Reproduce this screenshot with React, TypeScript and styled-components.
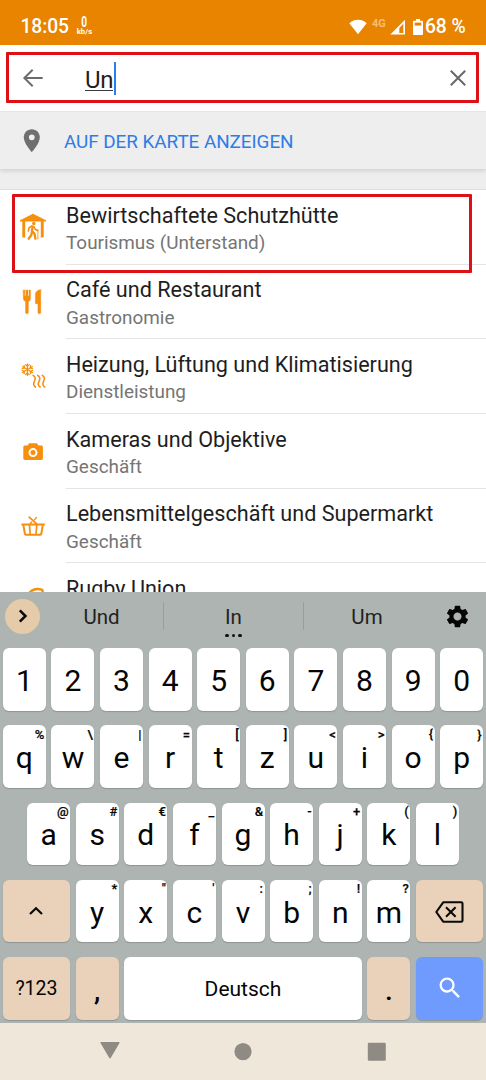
import React from "react";
import styled, { createGlobalStyle } from "styled-components";
import { MdPlace, MdSettings, MdSearch } from "react-icons/md";

const GlobalStyle = createGlobalStyle`
  * { box-sizing: border-box; }
  body { margin: 0; background: #fff; font-family: Roboto, "Liberation Sans", sans-serif; }
  svg { display: block; flex: none; }
`;

const Screen = styled.div`
  position: relative;
  width: 486px;
  height: 1080px;
  display: flex;
  flex-direction: column;
  overflow: hidden;
  background: #fff;
`;

const StatusBar = styled.header`
  display: flex;
  align-items: center;
  justify-content: space-between;
  height: 45px;
  padding: 8px 20.5px 0 20.5px;
  background: #e88400;
  color: #fff;
`;

const StatusGroup = styled.div`
  display: flex;
  align-items: center;
`;

const StatusText = styled.span<{ $after?: boolean }>`
  margin-left: ${(p) => (p.$after ? 2 : 0)}px;
  font-size: 19.3px;
  font-weight: 500;
  line-height: 24px;
  padding-top: 1px;
  letter-spacing: -0.1px;
  white-space: nowrap;
`;

const Speed = styled.div`
  display: flex;
  flex-direction: column;
  align-items: center;
  width: 17px;
  margin-left: 7px;
  font-weight: 700;
`;

const SpeedValue = styled.span`
  font-size: 14px;
  line-height: 11px;
  transform: scaleX(0.72);
`;

const SpeedUnit = styled.span`
  font-size: 7.8px;
  line-height: 8px;
`;

const Network = styled.span`
  width: 15px;
  margin: -5px 3px 0 5px;
  font-size: 11px;
  font-weight: 700;
  line-height: 14px;
  color: #f4bd78;
`;

const BatteryIcon = styled.svg`
  margin-left: 7px;
`;

const SearchBar = styled.div`
  display: flex;
  align-items: center;
  height: 66px;
  padding: 0 20px 0 22px;
`;

const Query = styled.div`
  display: flex;
  align-items: center;
  flex: 1;
  margin-left: 41px;
`;

const QueryText = styled.span`
  height: 28px;
  padding: 3px 0 0 0;
  font-size: 24px;
  line-height: 28px;
  letter-spacing: -0.4px;
  color: #1f1f1f;
  border-bottom: 1.4px solid #3c3c3c;
  margin: -3px 1px 0 0;
`;

const Caret = styled.i`
  width: 2px;
  height: 33px;
  background: #2b7bf3;
`;

const MapAction = styled.div`
  display: flex;
  align-items: center;
  height: 58px;
  padding-left: 18px;
  background: #eeeeee;
  border-top: 1px solid #e6e6e6;
  box-shadow: 0 2px 4px rgba(0, 0, 0, 0.12);
  z-index: 1;
  color: #6f6f6f;
`;

const MapLabel = styled.span`
  margin: 3px 0 0 18.4px;
  font-size: 18.9px;
  line-height: 24px;
  letter-spacing: -0.06px;
  color: #2f7ce6;
`;

const Spacer = styled.div`
  height: 21px;
  background: #eeeeee;
  border-bottom: 1px solid #dedede;
`;

const List = styled.main`
  height: 402px;
  overflow: hidden;
`;

const Row = styled.div`
  display: flex;
  height: 74.7px;
`;

const RowIcon = styled.div`
  width: 66px;
  padding: 23px 0 0 19px;
`;

const RowBody = styled.div`
  flex: 1;
  padding-top: 12.6px;
  border-bottom: 1px solid #e4e4e4;
  white-space: nowrap;
`;

const RowTitle = styled.div`
  font-size: 21.6px;
  line-height: 26px;
  color: #1e1e1e;
`;

const RowSub = styled.div`
  margin-top: 2.4px;
  font-size: 18.9px;
  line-height: 24px;
  color: #757575;
`;

const Keyboard = styled.section`
  height: 431px;
  background: #adb4b1;
  color: #050505;
`;

const Suggestions = styled.div`
  display: flex;
  align-items: center;
  height: 56px;
  padding: 0 15px 8px 5px;
`;

const Expand = styled.div`
  display: flex;
  align-items: center;
  justify-content: center;
  width: 35px;
  height: 35px;
  border-radius: 50%;
  background: #e5cba9;
`;

const Suggestion = styled.div<{ $w: number; $line?: boolean }>`
  position: relative;
  width: ${(p) => p.$w}px;
  height: 28px;
  font-size: 20.5px;
  line-height: 31px;
  text-align: center;
  color: #1f2221;
  border-right: ${(p) => (p.$line ? "1px solid #979e9b" : "none")};
`;

const More = styled.div`
  position: absolute;
  left: 0;
  right: 0;
  top: 31.6px;
  display: flex;
  justify-content: center;
  gap: 3.2px;
  i {
    width: 3.4px;
    height: 3.4px;
    border-radius: 50%;
    background: #111;
  }
`;

const SettingsSlot = styled.div`
  margin-left: auto;
`;

const Keys = styled.div`
  display: flex;
  flex-direction: column;
  gap: 14.8px;
`;

const KeyRow = styled.div`
  display: flex;
  justify-content: center;
  gap: 5.6px;
`;

const tones = { plain: "#ffffff", soft: "#e9d2b9", accent: "#6f9bff" };

const Key = styled.div<{ $units?: number; $tone?: keyof typeof tones; $size?: number; $drop?: number }>`
  position: relative;
  display: flex;
  align-items: center;
  justify-content: center;
  width: ${(p) => (p.$units ?? 1) * 48.6 - 5.6}px;
  height: 62.5px;
  padding-top: ${(p) => p.$drop ?? 0}px;
  border-radius: 6px;
  background: ${(p) => tones[p.$tone ?? "plain"]};
  box-shadow: 0 1px 1px rgba(70, 75, 72, 0.3);
  font-size: ${(p) => p.$size ?? 30}px;
  line-height: 36px;
`;

const Punct = styled.span`
  font-weight: 500;
`;

const Hint = styled.span`
  position: absolute;
  top: 1.5px;
  right: 1.5px;
  font-size: 13px;
  font-weight: 500;
  line-height: 15px;
  -webkit-text-stroke: 0.2px #050505;
`;

const NavBar = styled.nav`
  display: flex;
  align-items: flex-start;
  justify-content: space-between;
  height: 57px;
  padding: 17px 98px 0 99.500px;
  background: #efe7d9;
  color: #8f8b84;
`;

const Marker = styled.div<{ $x: number; $y: number; $w: number; $h: number }>`
  position: absolute;
  z-index: 2;
  left: ${(p) => p.$x}px;
  top: ${(p) => p.$y}px;
  width: ${(p) => p.$w}px;
  height: ${(p) => p.$h}px;
  border: 3px solid #dc1015;
  border-radius: 1px;
`;

const ORANGE = "#f68f0e";

const Glyph = ({ children }: { children: React.ReactNode }) => (
  <svg width="28" height="28" viewBox="0 0 28 28" fill="none" stroke={ORANGE} strokeLinecap="round" strokeLinejoin="round">
    {children}
  </svg>
);

const ShelterIcon = () => (
  <Glyph>
    <path d="M1 7.2 14 .8 27 7.2v1.2h-2.300v16h-2.900v-16H6.200v16H3.300v-16H1z" fill={ORANGE} stroke="none" />
    <circle cx="14.800" cy="10.500" r="1.700" fill={ORANGE} stroke="none" />
    <path d="M13.600 13.600 13 18l2.600 2.800.8 4.900M13.100 18.500l-.9 3.700-2.600 3.500" strokeWidth="2.300" />
    <path d="m14.800 13.600 1.700 3 2 .9M12.800 13l-2.800 1.800-.6 3.200" strokeWidth="1.600" />
    <path d="M18.900 16.500V26" strokeWidth=".9" />
  </Glyph>
);

const CutleryIcon = () => (
  <Glyph>
    <path
      d="M4.300 2h1.500v6h1V2h2.200v6h1V2h1.500v8.200c0 1.800-.9 2.900-2.100 3.400v10.800a1.450 1.450 0 0 1-2.900 0V13.600C5.200 13 4.300 12 4.300 10.200zM21.800 1.800v22.600a1.450 1.450 0 0 1-2.900 0v-8.600h-2.500V6.500c0-2.600 2.400-4.700 5.400-4.700z"
      fill={ORANGE}
      stroke={ORANGE}
      strokeWidth=".4"
    />
  </Glyph>
);

const ClimateIcon = () => (
  <Glyph>
    <g strokeWidth="1.200" transform="translate(8.400 7.600)">
      {[0, 60, 120, 180, 240, 300].map((a) => (
        <path key={a} transform={`rotate(${a})`} d="M0 0v-5.800M-1.900-5 0-3.200 1.900-5" />
      ))}
    </g>
    {[15.600, 20.200, 24.800].map((x) => (
      <path key={x} strokeWidth="1.500" d={`M${x - 1.500} 13.300c2.600 1.600 2.800 3.200 1.400 5.800s-1.600 4.200 1 5.900`} />
    ))}
  </Glyph>
);

const CameraIcon = () => (
  <Glyph>
    <path
      fillRule="evenodd"
      d="M10.200 6.300h7.600l1.800 2.200h2.600c1 0 1.700.7 1.700 1.700v11c0 1-.7 1.700-1.700 1.700H6c-1 0-1.700-.7-1.700-1.700v-11c0-1 .7-1.700 1.700-1.700h2.500zM14 11.100a4.500 4.500 0 1 0 0 9 4.500 4.500 0 0 0 0-9z"
      fill={ORANGE}
      stroke="none"
    />
    <circle cx="14" cy="15.600" r="2.500" fill={ORANGE} stroke="none" />
  </Glyph>
);

const BasketIcon = () => (
  <Glyph>
    <path d="M3.200 12.400h21.800M4.300 12.600l1.600 9.200c.1.500.5.900 1 .9h14.400c.5 0 .9-.4 1-.9l1.600-9.200" strokeWidth="2" />
    <path d="m10.400 12.500.8 10M17.800 12.500l-.8 10" strokeWidth="1.700" />
    <path d="m10.200 5.100 7.500 6.800" strokeWidth="1.800" />
    <path d="m17.500 5.500-2.200 2.400M12.700 10l-1.500 1.700" strokeWidth="1.300" />
  </Glyph>
);

const RugbyIcon = () => (
  <Glyph>
    <path d="M23.300 3.800C17.500 2 13 3.500 9.800 7.600c-3 3.600-4.800 8.400-4 13.800 5 1 9.600-.2 13.200-3.400 4-3.600 5.400-9.200 4.300-14.200z" strokeWidth="2.400" />
  </Glyph>
);

const results: { title: string; sub?: string; icon: React.ReactNode }[] = [
  { title: "Bewirtschaftete Schutzhütte", sub: "Tourismus (Unterstand)", icon: <ShelterIcon /> },
  { title: "Café und Restaurant", sub: "Gastronomie", icon: <CutleryIcon /> },
  { title: "Heizung, Lüftung und Klimatisierung", sub: "Dienstleistung", icon: <ClimateIcon /> },
  { title: "Kameras und Objektive", sub: "Geschäft", icon: <CameraIcon /> },
  { title: "Lebensmittelgeschäft und Supermarkt", sub: "Geschäft", icon: <BasketIcon /> },
  { title: "Rugby Union", icon: <RugbyIcon /> },
];

const topRow: [string, string][] = [
  ["q", "%"], ["w", "\\"], ["e", "|"], ["r", "="], ["t", "["],
  ["z", "]"], ["u", "<"], ["i", ">"], ["o", "{"], ["p", "}"],
];
const homeRow: [string, string][] = [
  ["a", "@"], ["s", "#"], ["d", "€"], ["f", "_"], ["g", "&"],
  ["h", "-"], ["j", "+"], ["k", "("], ["l", ")"],
];
const lowRow: [string, string][] = [
  ["y", "*"], ["x", "\""], ["c", "'"], ["v", ":"], ["b", ";"], ["n", "!"], ["m", "?"],
];

const Letters = ({ keys }: { keys: [string, string][] }) => (
  <>
    {keys.map(([letter, hint]) => (
      <Key key={letter} $drop={3}>
        {letter}
        <Hint>{hint}</Hint>
      </Key>
    ))}
  </>
);

export default function App() {
  return (
    <Screen>
      <GlobalStyle />
      <StatusBar>
        <StatusGroup>
          <StatusText>18:05</StatusText>
          <Speed>
            <SpeedValue>0</SpeedValue>
            <SpeedUnit>kb/s</SpeedUnit>
          </Speed>
        </StatusGroup>
        <StatusGroup>
          <svg width="18" height="16" viewBox="0 0 18 16" fill="#fff">
            <path d="M9 15.300.3 4.300C5.300-.3 12.700-.3 17.700 4.300z" />
          </svg>
          <Network>4G</Network>
          <svg width="16" height="16" viewBox="0 0 16 16">
            <path d="M.3 15.500 15 .7v14.800z" fill="#fff" />
            <path d="M9.300 9v5h4V4.700z" fill="#e88400" />
          </svg>
          <BatteryIcon width="10" height="16" viewBox="0 0 10 16">
            <path d="M3 0h4v1.800h2c.6 0 1 .4 1 1V15c0 .6-.4 1-1 1H1c-.6 0-1-.4-1-1V2.800c0-.6.4-1 1-1h2z" fill="#fff" />
            <path d="M1.700 3.600h6.600v3H1.700z" fill="#e88400" />
          </BatteryIcon>
          <StatusText $after>68 %</StatusText>
        </StatusGroup>
      </StatusBar>

      <SearchBar>
        <svg width="22" height="20" viewBox="0 0 22 20" fill="none" stroke="#6c6c6c" strokeWidth="2">
          <path d="M20.700 10H2.500M10.700 1.700 2.400 10l8.300 8.300" />
        </svg>
        <Query>
          <QueryText>Un</QueryText>
          <Caret />
        </Query>
        <svg width="16" height="16" viewBox="0 0 16 16" stroke="#686868" strokeWidth="2">
          <path d="m.8.8 14.400 14.400M15.200.8.8 15.200" />
        </svg>
      </SearchBar>

      <MapAction>
        <MdPlace size={27.6} />
        <MapLabel>AUF DER KARTE ANZEIGEN</MapLabel>
      </MapAction>
      <Spacer />

      <List>
        {results.map((r) => (
          <Row key={r.title}>
            <RowIcon>{r.icon}</RowIcon>
            <RowBody>
              <RowTitle>{r.title}</RowTitle>
              {r.sub && <RowSub>{r.sub}</RowSub>}
            </RowBody>
          </Row>
        ))}
      </List>

      <Keyboard>
        <Suggestions>
          <Expand>
            <svg width="12" height="16" viewBox="0 0 12 16" fill="none" stroke="#0a0a0a" strokeWidth="2.500">
              <path d="m2.800 2.300 5.700 5.700-5.700 5.700" />
            </svg>
          </Expand>
          <Suggestion $w={124} $line>Und</Suggestion>
          <Suggestion $w={140} $line>
            In
            <More><i /><i /><i /></More>
          </Suggestion>
          <Suggestion $w={126}>Um</Suggestion>
          <SettingsSlot>
            <MdSettings size={27} />
          </SettingsSlot>
        </Suggestions>
        <Keys>
          <KeyRow>
            {"1234567890".split("").map((d) => (
              <Key key={d} $drop={3.5}>{d}</Key>
            ))}
          </KeyRow>
          <KeyRow><Letters keys={topRow} /></KeyRow>
          <KeyRow><Letters keys={homeRow} /></KeyRow>
          <KeyRow>
            <Key $units={1.5} $tone="soft">
              <svg width="16" height="10" viewBox="0 0 16 10" fill="none" stroke="#0a0a0a" strokeWidth="2.200">
                <path d="m2 8 6-5.800L14 8" />
              </svg>
            </Key>
            <Letters keys={lowRow} />
            <Key $units={1.5} $tone="soft" $drop={1}>
              <svg width="29" height="22" viewBox="0 0 29 22" fill="none" stroke="#0a0a0a" strokeWidth="2.100" strokeLinejoin="round">
                <path d="M8.200 1.300h18c.8 0 1.300.5 1.300 1.300v16.800c0 .8-.5 1.300-1.300 1.300h-18L1.300 11zM11 6.200l9.600 9.600M20.600 6.200 11 15.800" />
              </svg>
            </Key>
          </KeyRow>
          <KeyRow>
            <Key $units={1.5} $tone="soft" $size={19.5} $drop={2}>?123</Key>
            <Key $tone="soft" $size={28} $drop={6}><Punct>,</Punct></Key>
            <Key $units={5} $size={21} $drop={1}>Deutsch</Key>
            <Key $tone="soft" $size={28} $drop={6}><Punct>.</Punct></Key>
            <Key $units={1.5} $tone="accent">
              <MdSearch size={28} color="#fff" />
            </Key>
          </KeyRow>
        </Keys>
      </Keyboard>

      <NavBar>
        <svg width="20" height="22" viewBox="0 0 20 22" fill="currentColor">
          <path d="M1.200 2h17.600c.7 0 1 .5.700 1.100L10.700 18c-.3.600-1.100.6-1.400 0L.5 3.100C.2 2.500.5 2 1.200 2z" />
        </svg>
        <svg width="18" height="22" viewBox="0 0 18 22" fill="currentColor">
          <circle cx="9" cy="11.600" r="8.600" />
        </svg>
        <svg width="22" height="22" viewBox="0 0 22 22" fill="currentColor">
          <rect x="1.800" y="2.700" width="18" height="18" rx="1.200" />
        </svg>
      </NavBar>

      <Marker $x={5.5} $y={52} $w={473.500} $h={51} />
      <Marker $x={12} $y={194} $w={460} $h={78.500} />
    </Screen>
  );
}
